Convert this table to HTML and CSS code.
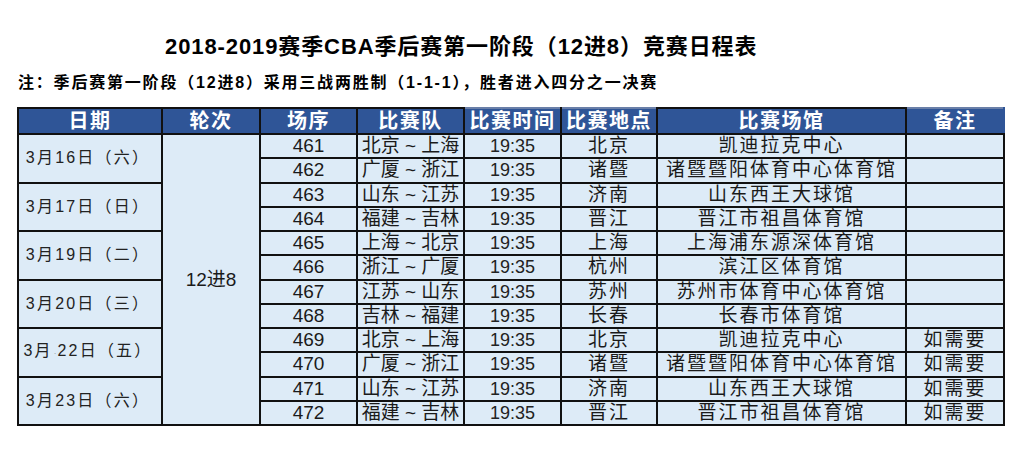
FILE: index.html
```html
<!DOCTYPE html>
<html lang="zh-CN">
<head>
<meta charset="utf-8">
<title>2018-2019赛季CBA季后赛第一阶段（12进8）竞赛日程表</title>
<link rel="stylesheet" href="styles.css">
</head>
<body>
<div class="page">
  <h1 class="title">2018-2019赛季CBA季后赛第一阶段（12进8）竞赛日程表</h1>
  <p class="note">注：季后赛第一阶段（12进8）采用三战两胜制（1-1-1），胜者进入四分之一决赛</p>
  <table class="schedule">
    <colgroup>
      <col class="c-date"><col class="c-round"><col class="c-seq"><col class="c-team">
      <col class="c-time"><col class="c-city"><col class="c-venue"><col class="c-note">
    </colgroup>
    <thead>
      <tr class="head">
        <th>日期</th>
        <th>轮次</th>
        <th>场序</th>
        <th>比赛队</th>
        <th class="open-top">比赛时间</th>
        <th class="open-top">比赛地点</th>
        <th>比赛场馆</th>
        <th class="open-top open-right">备注</th>
      </tr>
    </thead>
    <tbody>
      <tr>
        <td class="date" rowspan="2">3月16日（六）</td>
        <td class="round" rowspan="12">12进8</td>
        <td class="num">461</td><td class="team">北京 ~ 上海</td><td class="time">19:35</td><td class="cjk">北京</td><td class="cjk">凯迪拉克中心</td><td class="cjk"></td>
      </tr>
      <tr>
        <td class="num">462</td><td class="team">广厦 ~ 浙江</td><td class="time">19:35</td><td class="cjk">诸暨</td><td class="cjk">诸暨暨阳体育中心体育馆</td><td class="cjk"></td>
      </tr>
      <tr>
        <td class="date" rowspan="2">3月17日（日）</td>
        <td class="num">463</td><td class="team">山东 ~ 江苏</td><td class="time">19:35</td><td class="cjk">济南</td><td class="cjk">山东西王大球馆</td><td class="cjk"></td>
      </tr>
      <tr>
        <td class="num">464</td><td class="team">福建 ~ 吉林</td><td class="time">19:35</td><td class="cjk">晋江</td><td class="cjk">晋江市祖昌体育馆</td><td class="cjk"></td>
      </tr>
      <tr>
        <td class="date" rowspan="2">3月19日（二）</td>
        <td class="num">465</td><td class="team">上海 ~ 北京</td><td class="time">19:35</td><td class="cjk">上海</td><td class="cjk">上海浦东源深体育馆</td><td class="cjk"></td>
      </tr>
      <tr>
        <td class="num">466</td><td class="team">浙江 ~ 广厦</td><td class="time">19:35</td><td class="cjk">杭州</td><td class="cjk">滨江区体育馆</td><td class="cjk"></td>
      </tr>
      <tr>
        <td class="date" rowspan="2">3月20日（三）</td>
        <td class="num">467</td><td class="team">江苏 ~ 山东</td><td class="time">19:35</td><td class="cjk">苏州</td><td class="cjk">苏州市体育中心体育馆</td><td class="cjk"></td>
      </tr>
      <tr>
        <td class="num">468</td><td class="team">吉林 ~ 福建</td><td class="time">19:35</td><td class="cjk">长春</td><td class="cjk">长春市体育馆</td><td class="cjk"></td>
      </tr>
      <tr>
        <td class="date" rowspan="2">3月<span class="dot">·</span>22日（五）</td>
        <td class="num">469</td><td class="team">北京 ~ 上海</td><td class="time">19:35</td><td class="cjk">北京</td><td class="cjk">凯迪拉克中心</td><td class="cjk">如需要</td>
      </tr>
      <tr>
        <td class="num">470</td><td class="team">广厦 ~ 浙江</td><td class="time">19:35</td><td class="cjk">诸暨</td><td class="cjk">诸暨暨阳体育中心体育馆</td><td class="cjk">如需要</td>
      </tr>
      <tr>
        <td class="date" rowspan="2">3月23日（六）</td>
        <td class="num">471</td><td class="team">山东 ~ 江苏</td><td class="time">19:35</td><td class="cjk">济南</td><td class="cjk">山东西王大球馆</td><td class="cjk">如需要</td>
      </tr>
      <tr>
        <td class="num">472</td><td class="team">福建 ~ 吉林</td><td class="time">19:35</td><td class="cjk">晋江</td><td class="cjk">晋江市祖昌体育馆</td><td class="cjk">如需要</td>
      </tr>
    </tbody>
  </table>
</div>
</body>
</html>
```

FILE: styles.css
```css
html, body {
  margin: 0;
  padding: 0;
  background: #ffffff;
}

body {
  font-family: "Liberation Sans", "Noto Sans CJK SC", sans-serif;
  color: #111111;
}

.page {
  width: 1024px;
  height: 465px;
  overflow: hidden;
}

.title {
  margin: 0;
  padding: 33px 0 0 165px;
  font-size: 22px;
  line-height: 28px;
  font-weight: bold;
  letter-spacing: 0.9px;
  color: #000000;
  white-space: nowrap;
}

.note {
  margin: 0;
  padding: 12px 0 0 18px;
  font-size: 16px;
  line-height: 20px;
  font-weight: bold;
  letter-spacing: 1.8px;
  color: #000000;
  white-space: nowrap;
}

.schedule {
  margin: 14px 0 0 17px;
  width: 986px;
  table-layout: fixed;
  border-collapse: collapse;
  border: 2px solid #000000;
}

.c-date { width: 144px; }
.c-round { width: 98px; }
.c-seq { width: 97px; }
.c-team { width: 107px; }
.c-time { width: 97px; }
.c-city { width: 96px; }
.c-venue { width: 249px; }
.c-note { width: 98px; }

.schedule th,
.schedule td {
  border: 2px solid #111111;
  padding: 0;
  text-align: center;
  vertical-align: middle;
  white-space: nowrap;
  overflow: hidden;
}

.head {
  height: 26px;
}

.schedule th {
  background: #2f5597;
  color: #ffffff;
  font-size: 20px;
  line-height: 22px;
  font-weight: bold;
  letter-spacing: 1.5px;
}

.schedule th.open-top {
  border-top-color: #6a7fa8;
}

.schedule th.open-right {
  border-right-color: #2f5597;
}

.schedule tbody tr {
  height: 24.25px;
}

.schedule td {
  background: #ddebf7;
  font-size: 19px;
  line-height: 20px;
  color: #1a1a1a;
}

.schedule td.cjk {
  letter-spacing: 2px;
}

.schedule td.team {
  letter-spacing: 0;
}

.schedule td.num {
  font-size: 19px;
}

.schedule td.time {
  font-size: 18px;
  color: #222222;
}

.schedule td.date {
  font-size: 16px;
  letter-spacing: 2.2px;
  padding-right: 4px;
  color: #222222;
}

.schedule td.round {
  font-size: 19px;
}

.dot {
  font-size: 8px;
  color: #888888;
  letter-spacing: 0;
  padding: 0 1px;
}
```
